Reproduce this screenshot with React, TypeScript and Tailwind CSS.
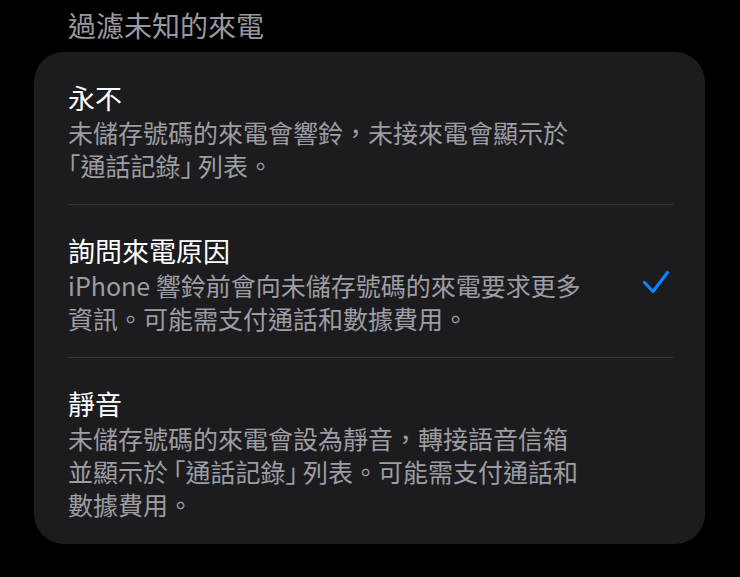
import React from "react";

const font = { fontFamily: '"Noto Sans CJK TC", "Noto Sans CJK SC", "Noto Sans", sans-serif' };

function Open({ gap }: { gap?: boolean }) {
  return <span className={"[font-feature-settings:'halt'] " + (gap ? "ml-[5px]" : "")}>「</span>;
}
function Close() {
  return <span className="[font-feature-settings:'halt'] mr-[5px]">」</span>;
}

function Check() {
  return (
    <svg width="28" height="24" viewBox="0 0 28 24" fill="none" className="shrink-0 mr-[3px] -mt-[4px]">
      <path d="M2.5 12.5 L11 21.5 L25.5 2.5" stroke="#0a84ff" strokeWidth="3.2" strokeLinecap="round" strokeLinejoin="round" />
    </svg>
  );
}

export default function App() {
  return (
    <div className="w-[740px] h-[577px] bg-black overflow-hidden" style={font}>
      <div className="pt-[7px] pl-[68px] text-[28px] leading-[36px] text-[#98989e]">過濾未知的來電</div>
      <div className="mt-[9px] ml-[34px] w-[671px] bg-[#1c1c1e] rounded-[30px]">
        <div className="ml-[34px] mr-[32px] pt-[28px] pb-[22px] border-b border-[#38383a]">
          <div className="text-[27px] leading-[36px] text-white">永不</div>
          <div className="w-[518px] text-[25px] leading-[33px] text-[#9d9da3]">
            未儲存號碼的來電會響鈴，未接來電會顯示於<Open />通話記錄<Close />列表。
          </div>
        </div>
        <div className="ml-[34px] mr-[32px] pt-[28px] pb-[22px] border-b border-[#38383a] flex items-center justify-between">
          <div>
            <div className="text-[27px] leading-[36px] text-white">詢問來電原因</div>
            <div className="w-[518px] text-[25px] leading-[33px] text-[#9d9da3]">
              iPhone 響鈴前會向未儲存號碼的來電要求更多資訊。可能需支付通話和數據費用。
            </div>
          </div>
          <Check />
        </div>
        <div className="ml-[34px] mr-[32px] pt-[28px] pb-[23px]">
          <div className="text-[27px] leading-[36px] text-white">靜音</div>
          <div className="w-[518px] text-[25px] leading-[33px] text-[#9d9da3]">
            未儲存號碼的來電會設為靜音，轉接語音信箱並顯示於<Open gap />通話記錄<Close />列表。可能需支付通話和數據費用。
          </div>
        </div>
      </div>
    </div>
  );
}
